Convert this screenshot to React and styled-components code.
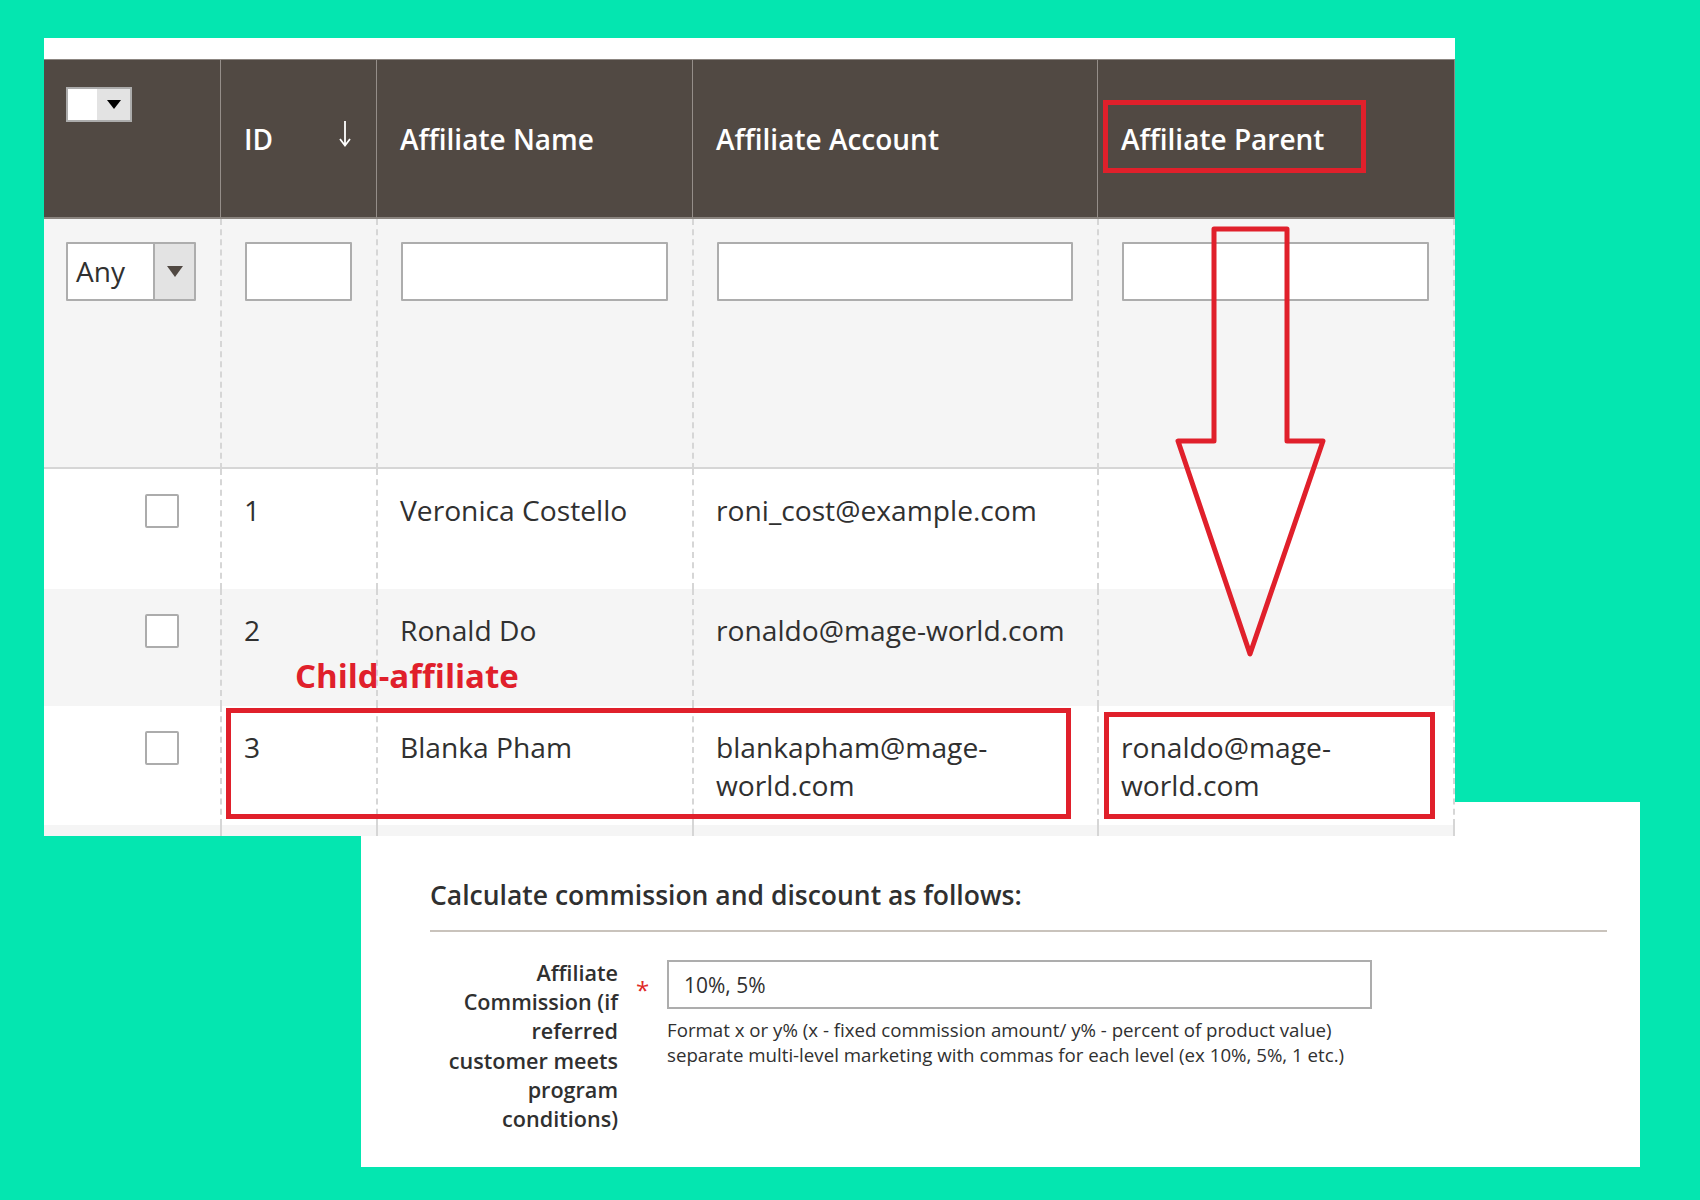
import React from 'react';
import styled, { createGlobalStyle } from 'styled-components';

const GlobalStyle = createGlobalStyle`
  html, body { margin: 0; padding: 0; }
  body {
    background: #04e6b0;
    font-family: "Open Sans", "Liberation Sans", sans-serif;
    color: #303030;
  }
  * { box-sizing: border-box; }
`;

const Page = styled.div`
  width: 1700px;
  height: 1200px;
  padding: 38px 0 0 44px;
  display: flex;
  flex-direction: column;
  align-items: flex-start;
  overflow: hidden;
`;

const TablePanel = styled.div`
  position: relative;
  z-index: 2;
  width: 1411px;
  background: #fff;
  padding-top: 21px;
`;

const Grid = styled.table`
  width: 100%;
  table-layout: fixed;
  border-collapse: separate;
  border-spacing: 0;
`;

const HeadCell = styled.th`
  height: 160px;
  background: #514943;
  color: #fff;
  font-weight: 600;
  font-size: 28px;
  line-height: 38px;
  text-align: left;
  padding: ${p => (p.$top ? '27px 22px 0' : '0 24px 0 23px')};
  vertical-align: ${p => (p.$top ? 'top' : 'middle')};
  border-top: 1px solid #8c8681;
  border-bottom: 2px solid #8a847f;
  border-left: 1px solid #958e89;
  &:first-child { border-left: none; }
  &:last-child { border-right: 1px solid #8c8681; }
`;

const HeadInner = styled.div`
  display: flex;
  align-items: center;
  justify-content: space-between;
`;

const SortIcon = styled.svg`
  width: 14px;
  height: 27px;
  margin-top: -10px;
`;

const MassSelect = styled.div`
  display: flex;
  width: 66px;
  height: 35px;
  border: 2px solid #acacac;
  background: #fff;
`;

const Toggle = styled.div`
  margin-left: auto;
  width: ${p => p.$w}px;
  background: #e3e3e3;
  border-left: ${p => (p.$divider ? '2px solid #adadad' : 'none')};
  display: flex;
  align-items: center;
  justify-content: center;
`;

const Caret = styled.span`
  width: 0;
  height: 0;
  border-left: ${p => p.$w / 2}px solid transparent;
  border-right: ${p => p.$w / 2}px solid transparent;
  border-top: ${p => p.$h}px solid ${p => p.$color};
`;

const FilterCell = styled.td`
  height: 250px;
  background: #f5f5f5;
  vertical-align: top;
  padding: 23px 24px 0 ${p => (p.$first ? 22 : 23)}px;
  border-left: 2px dashed #d6d6d6;
  border-bottom: 2px solid #d6d6d6;
  &:first-child { border-left: none; }
  &:last-child { border-right: 2px dashed #d6d6d6; }
`;

const FilterInput = styled.div`
  width: 100%;
  height: 59px;
  border: 2px solid #adadad;
  border-radius: 1px;
  background: #fff;
`;

const AnySelect = styled.div`
  display: flex;
  width: 130px;
  height: 59px;
  border: 2px solid #adadad;
  border-radius: 1px;
  background: #fff;
`;

const AnyText = styled.span`
  font-size: 28px;
  line-height: 55px;
  padding-left: 8px;
  color: #303030;
`;

const BodyCell = styled.td`
  height: ${p => p.$h}px;
  background: ${p => (p.$alt ? '#f5f5f5' : '#fff')};
  vertical-align: top;
  padding: ${p => (p.$h < 20 ? '0' : p.$check ? '25px 0 0 101px' : '22px 10px 0 22px')};
  font-size: 28.2px;
  line-height: 38px;
  color: #303030;
  border-left: 2px dashed #d6d6d6;
  &:first-child { border-left: none; }
  &:last-child { border-right: 2px dashed #d6d6d6; }
`;

const CheckBox = styled.div`
  width: 34px;
  height: 34px;
  border: 2px solid #acacac;
  border-radius: 2px;
  background: #fff;
`;

const RedBox = styled.div`
  position: absolute;
  left: ${p => p.$x}px;
  top: ${p => p.$y}px;
  width: ${p => p.$w}px;
  height: ${p => p.$h}px;
  border: 5px solid #e0202b;
  pointer-events: none;
`;

const ChildLabel = styled.div`
  position: absolute;
  left: 251px;
  top: 621px;
  font-size: 33px;
  line-height: 34px;
  font-weight: 700;
  color: #e0202b;
  white-space: nowrap;
`;

const ArrowSvg = styled.svg`
  position: absolute;
  left: 1126px;
  top: 184px;
  width: 160px;
  height: 440px;
  overflow: visible;
`;

const FormPanel = styled.section`
  position: relative;
  z-index: 1;
  margin: -34px 0 0 317px;
  width: 1279px;
  height: 365px;
  background: #fff;
  padding: 75px 33px 0 69px;
`;

const Title = styled.h2`
  margin: 0;
  font-size: 26.5px;
  line-height: 36px;
  font-weight: 600;
  color: #303030;
`;

const Divider = styled.div`
  margin-top: 17px;
  height: 2px;
  background: #c9c3bc;
`;

const FieldRow = styled.div`
  margin-top: 26px;
  display: grid;
  grid-template-columns: 188px 49px 705px;
  align-items: start;
`;

const Label = styled.div`
  padding-left: 4px;
  text-align: right;
  font-size: 21.6px;
  line-height: 29.2px;
  font-weight: 600;
  color: #303030;
`;

const Required = styled.div`
  text-align: center;
  padding-top: 20px;
  font-size: 24px;
  line-height: 24px;
  color: #e02b27;
`;

const Control = styled.div`
  padding-top: 2px;
`;

const TextInput = styled.div`
  height: 49px;
  border: 2px solid #adadad;
  display: flex;
  align-items: center;
  padding: 0 15px;
  font-size: 21px;
  color: #303030;
`;

const Note = styled.div`
  margin-top: 9px;
  font-size: 18.7px;
  line-height: 24.5px;
  color: #303030;
`;

const rows = [
  { id: '1', name: 'Veronica Costello', account: 'roni_cost@example.com', parent: '', h: 120, alt: false },
  { id: '2', name: 'Ronald Do', account: 'ronaldo@mage-world.com', parent: '', h: 117, alt: true },
  { id: '3', name: 'Blanka Pham', account: 'blankapham@mage-world.com', parent: 'ronaldo@mage-world.com', h: 119, alt: false },
];

export default function App() {
  return (
    <>
      <GlobalStyle />
      <Page>
        <TablePanel>
          <Grid>
            <colgroup>
              <col style={{ width: 176 }} />
              <col style={{ width: 156 }} />
              <col style={{ width: 316 }} />
              <col style={{ width: 405 }} />
              <col style={{ width: 358 }} />
            </colgroup>
            <thead>
              <tr>
                <HeadCell $top>
                  <MassSelect>
                    <Toggle $w={33}>
                      <Caret $w={15} $h={9} $color="#000" />
                    </Toggle>
                  </MassSelect>
                </HeadCell>
                <HeadCell>
                  <HeadInner>
                    <span>ID</span>
                    <SortIcon viewBox="0 0 14 27">
                      <path d="M7 1 V25 M2 19 L7 25.5 L12 19" fill="none" stroke="#fff" strokeWidth="1.8" />
                    </SortIcon>
                  </HeadInner>
                </HeadCell>
                <HeadCell>Affiliate Name</HeadCell>
                <HeadCell>Affiliate Account</HeadCell>
                <HeadCell>Affiliate Parent</HeadCell>
              </tr>
            </thead>
            <tbody>
              <tr>
                <FilterCell $first>
                  <AnySelect>
                    <AnyText>Any</AnyText>
                    <Toggle $w={41} $divider>
                      <Caret $w={16} $h={11} $color="#514943" />
                    </Toggle>
                  </AnySelect>
                </FilterCell>
                <FilterCell><FilterInput /></FilterCell>
                <FilterCell><FilterInput /></FilterCell>
                <FilterCell><FilterInput /></FilterCell>
                <FilterCell><FilterInput /></FilterCell>
              </tr>
              {rows.map(r => (
                <tr key={r.id}>
                  <BodyCell $h={r.h} $alt={r.alt} $check><CheckBox /></BodyCell>
                  <BodyCell $h={r.h} $alt={r.alt}>{r.id}</BodyCell>
                  <BodyCell $h={r.h} $alt={r.alt}>{r.name}</BodyCell>
                  <BodyCell $h={r.h} $alt={r.alt}>{r.account}</BodyCell>
                  <BodyCell $h={r.h} $alt={r.alt}>{r.parent}</BodyCell>
                </tr>
              ))}
              <tr>
                <BodyCell $h={11} $alt />
                <BodyCell $h={11} $alt />
                <BodyCell $h={11} $alt />
                <BodyCell $h={11} $alt />
                <BodyCell $h={11} $alt />
              </tr>
            </tbody>
          </Grid>

          <RedBox $x={1059} $y={62} $w={263} $h={73} />
          <ArrowSvg viewBox="0 0 160 440">
            <path
              d="M88 45 H161 V257 H197 L124 470 L52 257 H88 Z"
              transform="translate(-44 -38)"
              fill="none"
              stroke="#e0202b"
              strokeWidth="5"
              strokeLinejoin="round"
            />
          </ArrowSvg>
          <ChildLabel>Child-affiliate</ChildLabel>
          <RedBox $x={182} $y={670} $w={845} $h={111} />
          <RedBox $x={1060} $y={674} $w={331} $h={107} />
        </TablePanel>

        <FormPanel>
          <Title>Calculate commission and discount as follows:</Title>
          <Divider />
          <FieldRow>
            <Label>Affiliate Commission (if referred customer meets program conditions)</Label>
            <Required>*</Required>
            <Control>
              <TextInput>10%, 5%</TextInput>
              <Note>
                Format x or y% (x - fixed commission amount/ y% - percent of product value)
                <br />
                separate multi-level marketing with commas for each level (ex 10%, 5%, 1 etc.)
              </Note>
            </Control>
          </FieldRow>
        </FormPanel>
      </Page>
    </>
  );
}
